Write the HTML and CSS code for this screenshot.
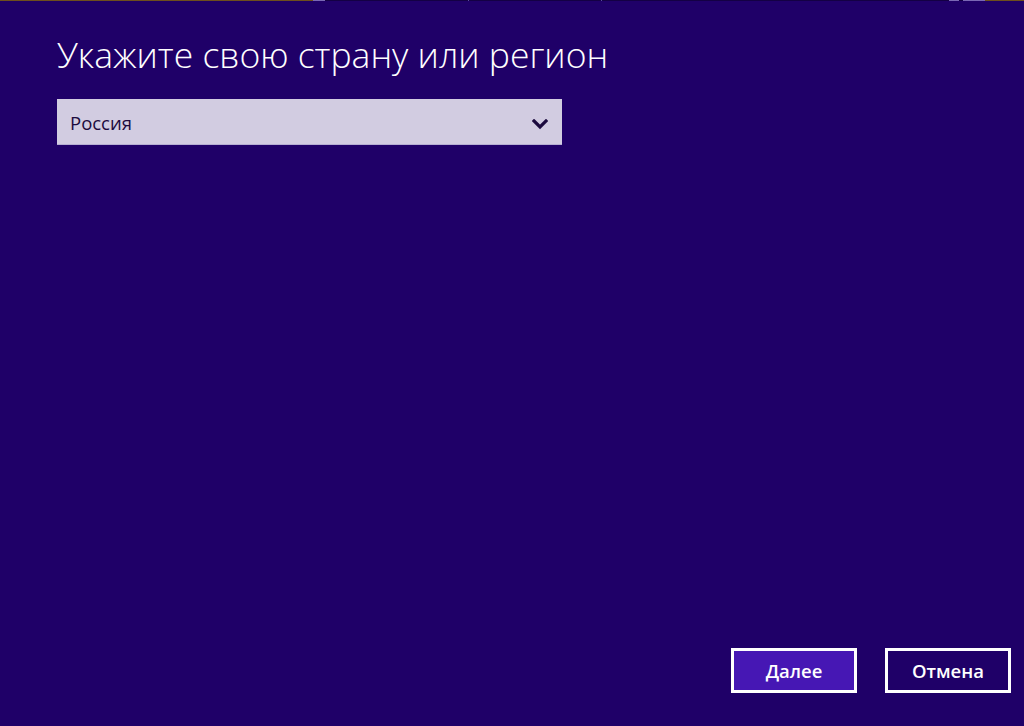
FILE: index.html
```html
<!DOCTYPE html>
<html lang="ru">
<head>
<meta charset="utf-8">
<title>Укажите свою страну или регион</title>
<link rel="stylesheet" href="styles.css">
</head>
<body>
<div class="strip">
  <span class="seg brown" style="width:313px"></span>
  <span class="seg light" style="width:12px"></span>
  <span class="seg dark" style="width:143px"></span>
  <span class="seg tick" style="width:1px"></span>
  <span class="seg dark" style="width:132px"></span>
  <span class="seg tick" style="width:1px"></span>
  <span class="seg dark" style="width:347px"></span>
  <span class="seg light" style="width:10px"></span>
  <span class="seg dark" style="width:4px"></span>
  <span class="seg light" style="width:22px"></span>
  <span class="seg brown fill"></span>
</div>
<main class="page">
  <h1 class="title">Укажите свою страну или регион</h1>
  <div class="select">
    <span class="select-value">Россия</span>
    <svg class="chevron" width="16" height="11" viewBox="0 0 16 11"><path d="M2 2 L8 8 L14 2" fill="none" stroke="#1c0a3e" stroke-width="3.2" stroke-linecap="square"/></svg>
  </div>
  <div class="actions">
    <button class="btn btn-primary">Далее</button>
    <button class="btn">Отмена</button>
  </div>
</main>
</body>
</html>
```
FILE: styles.css
```css
html, body {
  margin: 0;
  padding: 0;
  height: 100%;
}
body {
  background: #1f0068;
  font-family: "Open Sans", "Noto Sans", sans-serif;
  color: #fff;
  overflow: hidden;
}
.strip {
  display: flex;
  height: 1px;
}
.seg { display: block; height: 1px; flex: none; }
.seg.fill { flex: 1; }
.brown { background: #6e4f1c; }
.light { background: #7a68b4; }
.dark { background: #140044; }
.tick { background: #5a4aa0; }
.page {
  display: flex;
  flex-direction: column;
  height: 725px;
  box-sizing: border-box;
  padding: 0 13px 33px 57px;
}
.title {
  margin: 30px 0 0 0;
  font-weight: 300;
  font-size: 35.5px;
  line-height: 46px;
  letter-spacing: 0;
  color: #fff;
}
.select {
  margin-top: 22px;
  width: 505px;
  height: 46px;
  box-sizing: border-box;
  background: #d2cce1;
  border-bottom: 1px solid #b6aed2;
  display: flex;
  align-items: center;
  justify-content: space-between;
  padding: 2px 14px 0 13px;
}
.select-value {
  color: #1c0a3e;
  font-size: 18.5px;
}
.chevron { display: block; margin-top: 4px; }
.actions {
  margin-top: auto;
  display: flex;
  justify-content: flex-end;
  gap: 28px;
}
.btn {
  width: 126px;
  height: 45px;
  box-sizing: border-box;
  border: 3px solid #fff;
  background: transparent;
  color: #fff;
  font-family: "Open Sans", "Noto Sans", sans-serif;
  font-weight: 600;
  font-size: 18.5px;
  padding: 0;
}
.btn-primary {
  background: #4617b4;
}
```
